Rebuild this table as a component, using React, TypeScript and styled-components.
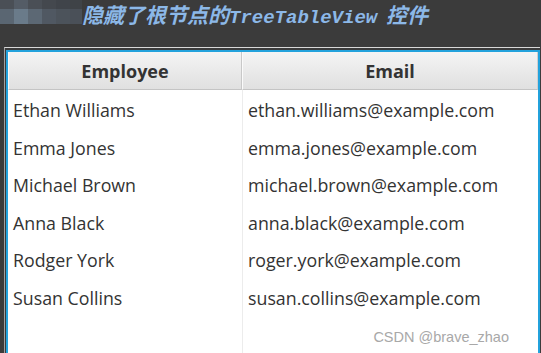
import React from "react";
import styled, { createGlobalStyle } from "styled-components";

const Global = createGlobalStyle`
  html, body { margin: 0; padding: 0; background: #3c3c3c; overflow: hidden; }
  body { width: 541px; height: 353px; }
`;

const Page = styled.div`
  width: 541px;
  height: 353px;
  background: #3b3b3b;
  display: flex;
  flex-direction: column;
  overflow: hidden;
  position: relative;
`;

const TitleBar = styled.div`
  height: 47px;
  display: flex;
  align-items: flex-start;
`;

const Mosaic = styled.svg`
  width: 82px;
  height: 24px;
  flex: none;
  display: block;
`;

const Title = styled.div`
  font-family: "Noto Sans CJK SC", sans-serif;
  font-size: 21px;
  font-weight: 700;
  font-style: italic;
  color: #8cb8e8;
  line-height: 28px;
  white-space: nowrap;
`;

const Code = styled.span`
  font-family: "Liberation Mono", monospace;
  font-size: 19px;
  font-weight: 700;
  font-style: italic;
  margin-right: 4px;
`;

const Frame = styled.div`
  flex: 1;
  margin-left: 4px;
  margin-right: 1px;
  border-top: 1px solid #d8d8d8;
  border-left: 1px solid #a0a0a0;
  padding: 2px 0 0 1px;
  display: flex;
  min-height: 0;
`;

const Table = styled.div`
  flex: 1;
  border: 2px solid #23a2dc;
  border-bottom: none;
  background: #ffffff;
  display: grid;
  grid-template-columns: 234px 1fr;
  grid-auto-rows: 37.5px;
  grid-template-rows: 38px;
  align-content: start;
  min-height: 0;
  position: relative;
`;

const Header = styled.div<{ $last?: boolean }>`
  background: linear-gradient(#f4f4f4, #e0e0e0);
  border-right: ${(p) => (p.$last ? "1px solid #cfcfcf" : "1px solid #c8c8c8")};
  border-left: 1px solid #fafafa;
  border-bottom: 1px solid #c4c4c4;
  display: flex;
  align-items: center;
  justify-content: center;
  padding-top: 1px;
  font-family: "Open Sans", sans-serif;
  font-weight: 700;
  font-size: 18px;
  color: #333333;
`;

const Cell = styled.div<{ $first?: boolean }>`
  display: flex;
  align-items: center;
  padding-top: 3px;
  padding-left: ${(p) => (p.$first ? "5px" : "6px")};
  font-family: "Open Sans", sans-serif;
  font-size: 17.8px;
  color: #333333;
  white-space: nowrap;
`;

const ColumnLine = styled.div`
  position: absolute;
  left: 234px;
  top: 38px;
  bottom: 0;
  width: 1px;
  background: #ececec;
`;

const Watermark = styled.div`
  position: absolute;
  right: 29px;
  bottom: 8px;
  font-family: "Liberation Sans", Arial, sans-serif;
  font-size: 14.5px;
  color: #a8a8a8;
`;

const rows = [
  ["Ethan Williams", "ethan.williams@example.com"],
  ["Emma Jones", "emma.jones@example.com"],
  ["Michael Brown", "michael.brown@example.com"],
  ["Anna Black", "anna.black@example.com"],
  ["Rodger York", "roger.york@example.com"],
  ["Susan Collins", "susan.collins@example.com"],
];

const mosaic = [
  ["#4a4f56", "#545c66", "#4a4f56", "#44484e", "#40444a", "#3f4347"],
  ["#5a6672", "#6a7b8a", "#5c6874", "#505862", "#4c535b", "#4a5058"],
];

export default function App() {
  return (
    <>
      <Global />
      <Page>
        <TitleBar>
          <Mosaic viewBox="0 0 82 24">
            {mosaic.map((row, r) =>
              row.map((c, i) => (
                <rect key={`${r}-${i}`} x={i * 14} y={r === 0 ? 0 : 9} width={14} height={r === 0 ? 9 : 15} fill={c} />
              ))
            )}
          </Mosaic>
          <Title>
            隐藏了根节点的<Code>TreeTableView</Code> 控件
          </Title>
        </TitleBar>
        <Frame>
          <Table>
            <Header>Employee</Header>
            <Header $last>Email</Header>
            {rows.map(([n, e]) => (
              <React.Fragment key={n}>
                <Cell $first>{n}</Cell>
                <Cell>{e}</Cell>
              </React.Fragment>
            ))}
            <ColumnLine />
            <Watermark>CSDN @brave_zhao</Watermark>
          </Table>
        </Frame>
      </Page>
    </>
  );
}
